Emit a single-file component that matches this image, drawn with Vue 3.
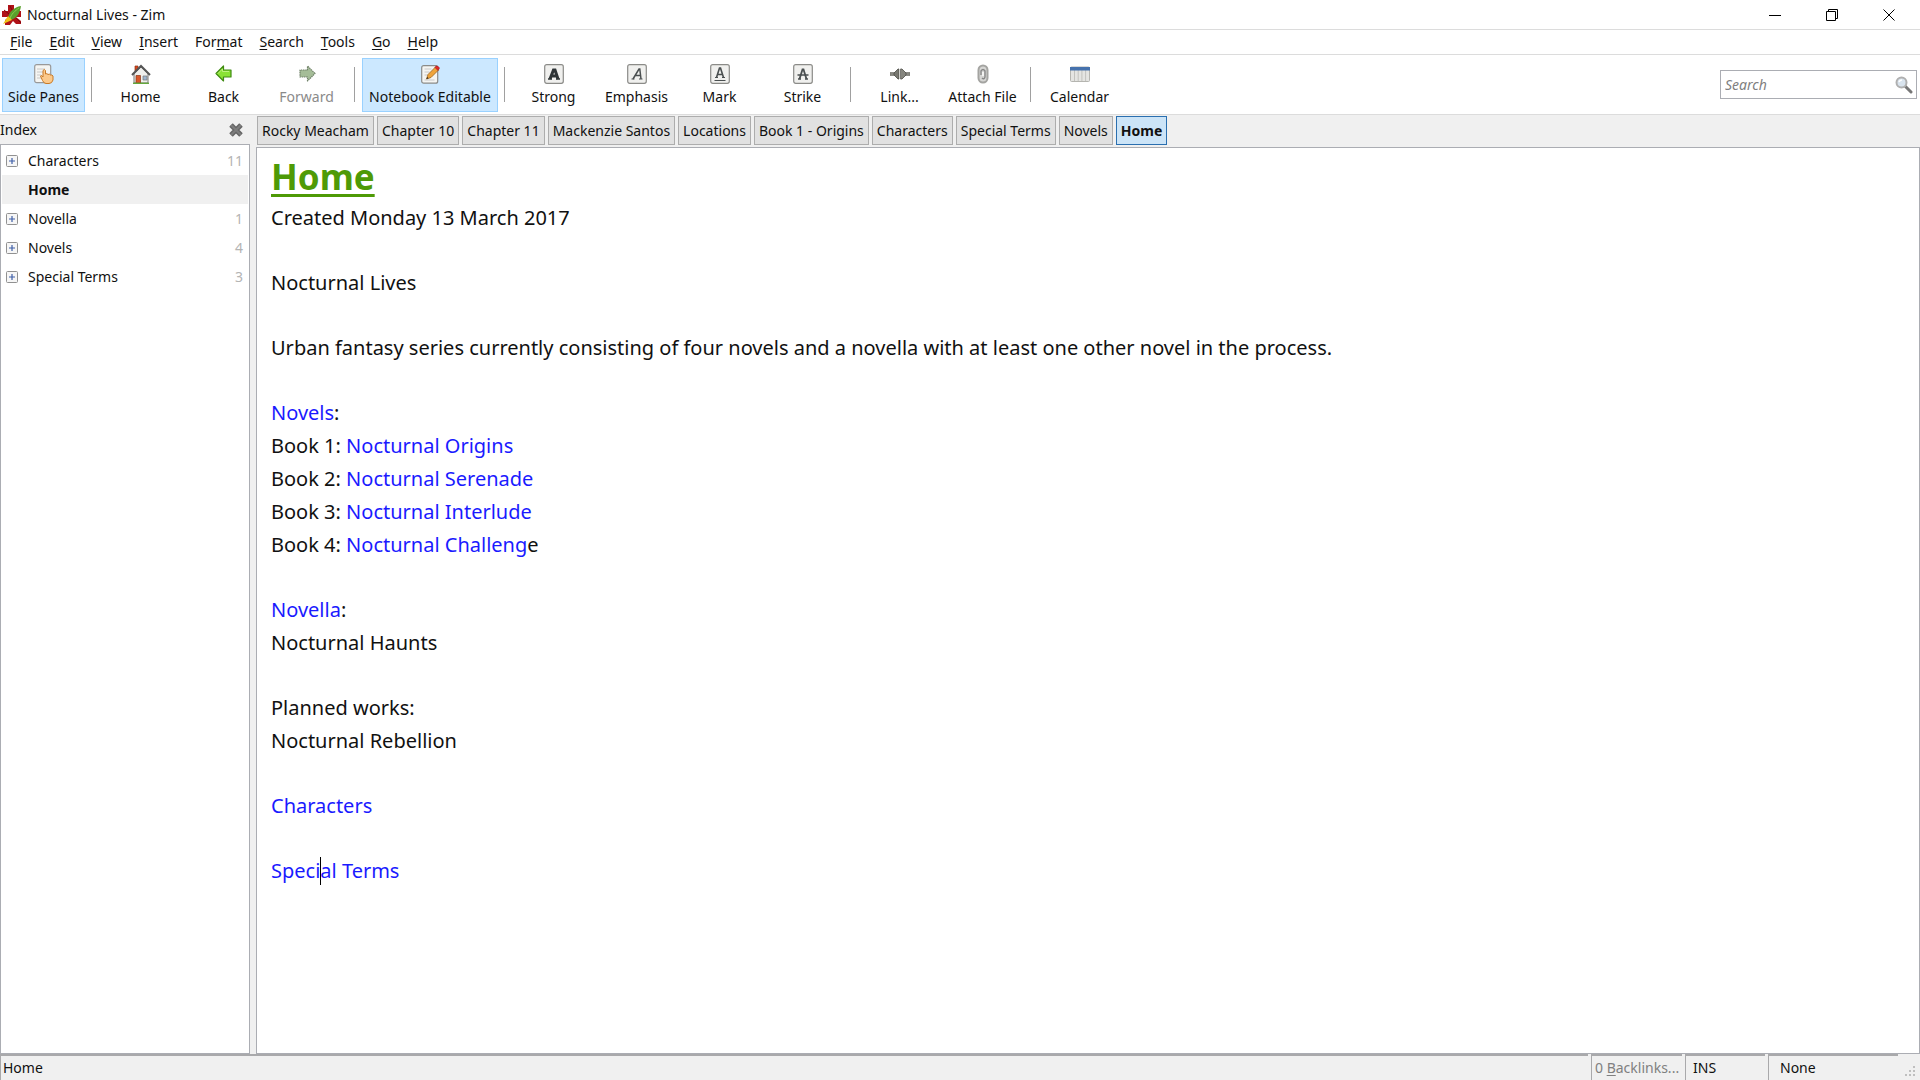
<!-- App.vue -->
<template>
  <div class="window">
    <header class="titlebar">
      <svg class="app-icon" viewBox="0 0 20 20">
        <path d="M6 0h6v6h7v6h-5l5 4v3h-5l-3-3-3 4H3v-5l4-3H0V6h6z" fill="#b01218" />
        <path d="M8 1l3 6M14 13l5 5M2 5l5 4" stroke="#7a0a0e" stroke-width="1" />
        <path d="M19 1C12 2 7 7 6 13l3 2c6-2 9-7 10-14z" fill="#5aa02c" />
        <path d="M17 3C13 6 9 9 8 14" stroke="#8ccf4d" stroke-width="1" fill="none" />
        <path d="M6 11L1 19l9-4z" fill="#f0c419" />
      </svg>
      <span class="title">Nocturnal Lives - Zim</span>
      <div class="window-buttons">
        <button aria-label="Minimize">
          <svg viewBox="0 0 12 12"><path d="M0 6.5h12" /></svg>
        </button>
        <button aria-label="Restore">
          <svg viewBox="0 0 12 12"><path d="M.5 2.500h9v9h-9zM2.500 2.500v-2h9v9h-2" /></svg>
        </button>
        <button aria-label="Close">
          <svg viewBox="0 0 12 12"><path d="M.5.5l11 11M11.500.5l-11 11" /></svg>
        </button>
      </div>
    </header>

    <nav class="menubar">
      <button v-for="item in menus" :key="item.key + item.after">
        {{ item.before }}<u>{{ item.key }}</u>{{ item.after }}
      </button>
    </nav>

    <div class="toolbar">
      <template v-for="(tool, i) in tools" :key="i">
        <span v-if="tool === '|'" class="separator"></span>
        <button
          v-else
          class="tool"
          :class="{ active: tool.active, wide: tool.wide }"
          :disabled="tool.disabled"
        >
          <svg class="tool-icon" viewBox="0 0 20 20" v-html="icons[tool.icon]"></svg>
          <span>{{ tool.label }}</span>
        </button>
      </template>
      <label class="search">
        <input v-model="query" type="text" placeholder="Search" aria-label="Search" />
        <svg viewBox="0 0 18 18">
          <path d="M10 10l6 6" stroke="#777" stroke-width="3" stroke-linecap="round" />
          <circle cx="6.500" cy="6.500" r="5" fill="#d9e4ee" stroke="#b0b0b0" stroke-width="2" />
          <path d="M4 6a3 3 0 0 1 3-2" stroke="#fff" stroke-width="1.500" fill="none" />
        </svg>
      </label>
    </div>

    <div class="workspace">
      <aside class="side-pane">
        <div class="pane-header">
          <span>Index</span>
          <button aria-label="Close pane">
            <svg viewBox="0 0 16 16">
              <path d="M3 3l10 10M13 3L3 13" stroke="#666" stroke-width="5" />
              <path d="M3 3l10 10M13 3L3 13" stroke="#7d7d7d" stroke-width="2" />
            </svg>
          </button>
        </div>
        <ul class="tree">
          <li v-for="page in pages" :key="page.name" :class="{ selected: !page.count }">
            <span class="expander">
              <svg v-if="page.count" viewBox="0 0 12 12">
                <rect x=".5" y=".5" width="11" height="11" rx="1" fill="#f6f6f6" stroke="#919191" />
                <path d="M3 6h6M6 3v6" stroke="#3f5fa8" stroke-width="1.200" />
              </svg>
            </span>
            <span class="page-name">{{ page.name }}</span>
            <span class="count">{{ page.count }}</span>
          </li>
        </ul>
      </aside>

      <main class="main-pane">
        <nav class="pathbar">
          <button v-for="tab in history" :key="tab" :class="{ current: tab === 'Home' }">
            {{ tab }}
          </button>
        </nav>
        <article class="page">
          <h1>Home</h1>
          <p>Created Monday 13 March 2017</p>
          <p>Nocturnal Lives</p>
          <p>
            Urban fantasy series currently consisting of four novels and a novella with at least one
            other novel in the process.
          </p>
          <p>
            <a href="#novels">Novels</a>:<br />
            Book 1: <a href="#origins">Nocturnal Origins</a><br />
            Book 2: <a href="#serenade">Nocturnal Serenade</a><br />
            Book 3: <a href="#interlude">Nocturnal Interlude</a><br />
            Book 4: <a href="#challenge">Nocturnal Challeng</a>e
          </p>
          <p><a href="#novella">Novella</a>:<br />Nocturnal Haunts</p>
          <p>Planned works:<br />Nocturnal Rebellion</p>
          <p><a href="#characters">Characters</a></p>
          <p>
            <a href="#terms">Speci<span class="caret"></span>al Terms</a>
          </p>
        </article>
      </main>
    </div>

    <footer class="statusbar">
      <span class="cell path">Home</span>
      <button class="cell backlinks" disabled>0 <u>B</u>acklinks...</button>
      <span class="cell mode">INS</span>
      <span class="cell style-name">None</span>
      <svg class="grip" viewBox="0 0 12 12">
        <path
          d="M8 0h2v2H8zM4 4h2v2H4zM8 4h2v2H8zM0 8h2v2H0zM4 8h2v2H4zM8 8h2v2H8z"
          fill="#bfbfbf"
        />
      </svg>
    </footer>
  </div>
</template>

<script setup>
import { ref } from "vue";

const query = ref("");

const menus = [
  { before: "", key: "F", after: "ile" },
  { before: "", key: "E", after: "dit" },
  { before: "", key: "V", after: "iew" },
  { before: "", key: "I", after: "nsert" },
  { before: "For", key: "m", after: "at" },
  { before: "", key: "S", after: "earch" },
  { before: "", key: "T", after: "ools" },
  { before: "", key: "G", after: "o" },
  { before: "", key: "H", after: "elp" },
];

// "|" is a separator
const tools = [
  { label: "Side Panes", icon: "panes", active: true },
  "|",
  { label: "Home", icon: "home" },
  { label: "Back", icon: "back" },
  { label: "Forward", icon: "forward", disabled: true },
  "|",
  { label: "Notebook Editable", icon: "edit", active: true, wide: true },
  "|",
  { label: "Strong", icon: "strong" },
  { label: "Emphasis", icon: "emphasis" },
  { label: "Mark", icon: "mark" },
  { label: "Strike", icon: "strike" },
  "|",
  { label: "Link...", icon: "link" },
  { label: "Attach File", icon: "attach" },
  "|",
  { label: "Calendar", icon: "calendar" },
];

const frame =
  '<rect x=".7" y=".7" width="18.600" height="18.600" rx="2" fill="#f0f0ee" stroke="#8b8b88" stroke-width="1.200"/>';

const icons = {
  panes:
    '<rect x=".7" y=".7" width="16" height="18" rx="2" fill="#f5f5f2" stroke="#999" stroke-width="1.200"/>' +
    '<path d="M3 5h8M3 8h6M3 11h4M3 14h4" stroke="#c8c8c8"/>' +
    '<path d="M9 13V6.500q1.500-2 2.500 0V10q1.500-1 2.500.5 1.500-1 2.500.5 1.500-.5 2.500 1v4q-1 3.500-4 3.500h-3q-2 0-3.500-3L6.500 12q1-1.500 2.500 1z" fill="#fbc98b" stroke="#c97b28"/>',
  home:
    '<path d="M4 2h3v5H4z" fill="#d9481f" stroke="#8a3515" stroke-width=".7"/>' +
    '<path d="M3 9.500L10 3l7 6.500V19H3z" fill="#efefed" stroke="#777"/>' +
    '<path d="M1 11L10 2l9 9" fill="none" stroke="#555" stroke-width="2"/>' +
    '<path d="M5 11.500h4.500V19H5z" fill="#d9562b" stroke="#8a3515" stroke-width=".7"/>' +
    '<path d="M12 12h4v4h-4z" fill="#9db5cf" stroke="#777" stroke-width=".7"/>' +
    '<path d="M2 19.300h16" stroke="#65a83c" stroke-width="1.400"/>',
  back: '<path d="M2 9.500L9.500 2v4H17v7H9.500v4z" fill="#8ae234" stroke="#3f8a12" stroke-width="1.200" stroke-linejoin="round"/><path d="M4 9.500L8.500 5v2.500H15" fill="none" stroke="#bdf27d"/>',
  forward:
    '<path d="M18 9.500L10.500 2v4H3v7h7.500v4z" fill="#a5bd98" stroke="#71826a" stroke-width="1.200" stroke-dasharray="1.500 .7" stroke-linejoin="round"/>',
  edit:
    '<rect x="1.700" y="1.700" width="16" height="17.500" rx="2" fill="#f5f5f2" stroke="#8b8b88" stroke-width="1.200"/>' +
    '<path d="M4.500 5h7M4.500 8h5M4.500 11h3M4.500 16h10" stroke="#c8c8c8"/>' +
    '<path d="M6.500 15L8 10.500 15.500 3l3 3L11 13.500z" fill="#efa43b" stroke="#9a6420" stroke-width=".8"/>' +
    '<path d="M15 3.500l1-1.500q2-.5 3.500 2L18 6.500z" fill="#df2929" stroke="#a51818" stroke-width=".6"/>' +
    '<path d="M6.500 15l.7-2 1.300 1.300z" fill="#222"/>',
  strong:
    frame +
    '<path d="M6 15L9.500 6h1.500l3 9M7.500 12h6" fill="none" stroke="#2e3436" stroke-width="3"/><path d="M4 15h4M12 15h4" stroke="#2e3436" stroke-width="1.500"/>',
  emphasis:
    frame +
    '<path d="M6 15l6-10h.8L14 15M8 11.500h5.500" fill="none" stroke="#4a4f50" stroke-width="1.500"/><path d="M4.500 15h3M12 15h3.500" stroke="#4a4f50"/>',
  mark:
    frame +
    '<path d="M6.500 13.500L9.500 4h1l3 9.500M7.500 10.500h5" fill="none" stroke="#4a4f50" stroke-width="1.600"/><path d="M5 13.500h3M12 13.500h3M4.500 16.500h11" stroke="#4a4f50" stroke-width="1.200"/>',
  strike:
    frame +
    '<path d="M6.500 15L9.500 5.500h1l3 9.500" fill="none" stroke="#4a4f50" stroke-width="1.800"/><path d="M5 15h3M12 15h3M4.500 11h11" stroke="#4a4f50" stroke-width="1.500"/>',
  link:
    '<path d="M0 8.500h5v3H0zM15 8.500h5v3h-5z" fill="#888882" stroke="#686862" stroke-width=".6"/>' +
    '<path d="M4 9l4-4h1v10H8l-4-4z" fill="#777770" stroke="#4c4c48" stroke-width=".8"/>' +
    '<path d="M16 9l-4-4h-1.500v10H12l4-4z" fill="#85857e" stroke="#4c4c48" stroke-width=".8"/>' +
    '<path d="M9.700 5v10" stroke="#d6d6d2"/>',
  attach:
    '<rect x="5.500" y="1.500" width="9" height="17" rx="4.500" fill="#d6d6d4" stroke="#a4a4a1" stroke-width="2"/>' +
    '<path d="M8 11V7q2-3 4 0v6q-1 3-3 1" fill="none" stroke="#888" stroke-width="1.400"/><path d="M10 8v4" stroke="#fff" stroke-width="1.400"/>',
  calendar:
    '<rect x=".5" y="3" width="19" height="14.500" rx="1" fill="#e5e5e2" stroke="#b5b5b0"/>' +
    '<path d="M4.500 6v11M8.200 6v11M11.900 6v11M15.600 6v11" stroke="#c2c2be"/>' +
    '<path d="M0 3h20v3.500H0z" fill="#4672ad"/>',
};

const pages = [
  { name: "Characters", count: 11 },
  { name: "Home" },
  { name: "Novella", count: 1 },
  { name: "Novels", count: 4 },
  { name: "Special Terms", count: 3 },
];

const history = [
  "Rocky Meacham",
  "Chapter 10",
  "Chapter 11",
  "Mackenzie Santos",
  "Locations",
  "Book 1 - Origins",
  "Characters",
  "Special Terms",
  "Novels",
  "Home",
];
</script>

<style>
body {
  background: #fff;
}
</style>

<style scoped>
.window {
  display: flex;
  flex-direction: column;
  min-height: 100vh;
  font-family: "Noto Sans", "Open Sans", sans-serif;
  font-size: 14px;
  line-height: 20px;
  color: #111;
  background: #f0f0f0;
}

button {
  margin: 0;
  padding: 0;
  border: 0;
  background: none;
  font: inherit;
  color: inherit;
}

button svg {
  display: block;
}

u {
  text-underline-offset: 2px;
}

/* title bar */
.titlebar {
  display: flex;
  align-items: center;
  height: 29px;
  padding-left: 2px;
  background: #fff;
  border-bottom: 1px solid #dcdcdc;
}

.app-icon {
  width: 20px;
  height: 20px;
  margin-right: 5px;
}

.window-buttons {
  display: flex;
  margin-left: auto;
  padding-right: 3px;
}

.window-buttons button {
  display: flex;
  justify-content: center;
  width: 57px;
}

.window-buttons svg {
  width: 12px;
  height: 12px;
  fill: none;
  stroke: #000;
}

/* menu */
.menubar {
  display: flex;
  gap: 17px;
  height: 24px;
  padding-left: 10px;
  background: #fff;
  border-bottom: 1px solid #dcdcdc;
}

/* toolbar */
.toolbar {
  display: flex;
  align-items: center;
  height: 59px;
  padding: 0 3px 0 2px;
  background: #fff;
  border-bottom: 1px solid #dcdcdc;
}

.tool {
  display: flex;
  flex-direction: column;
  align-items: center;
  gap: 3px;
  box-sizing: border-box;
  width: 83px;
  height: 54px;
  padding-top: 5px;
  border: 1px solid transparent;
  white-space: nowrap;
}

.tool.wide {
  width: 136px;
}

.tool.active {
  background: #cce8ff;
  border-color: #99d1ff;
}

.tool:disabled {
  color: #8a8a8a;
}

.tool-icon {
  width: 20px;
  height: 20px;
}

.separator {
  width: 1px;
  height: 35px;
  margin: 0 7px 0 6px;
  background: #a0a0a0;
}

.search {
  display: flex;
  align-items: center;
  box-sizing: border-box;
  width: 197px;
  height: 29px;
  margin-left: auto;
  padding: 0 3px 0 4px;
  border: 1px solid #abadb3;
}

.search input {
  flex: 1;
  min-width: 0;
  padding: 0;
  border: 0;
  outline: 0;
  font: inherit;
}

.search input::placeholder {
  color: #808080;
  font-style: italic;
}

.search svg {
  width: 18px;
  height: 18px;
}

/* side pane */
.workspace {
  display: flex;
  flex: 1;
  gap: 6px;
}

.side-pane {
  display: flex;
  flex-direction: column;
  width: 250px;
}

.pane-header {
  display: flex;
  align-items: center;
  justify-content: space-between;
  height: 29px;
  padding-right: 6px;
}

.pane-header svg {
  width: 16px;
  height: 16px;
}

.tree {
  flex: 1;
  margin: 0;
  padding: 1px;
  list-style: none;
  background: #fff;
  border: 1px solid #abadb3;
}

.tree li {
  display: flex;
  align-items: center;
  height: 29px;
  padding: 0 5px 0 4px;
}

.tree .selected {
  background: #f0f0f0;
  font-weight: bold;
}

.expander {
  width: 22px;
}

.expander svg {
  display: block;
  width: 12px;
  height: 12px;
}

.page-name {
  flex: 1;
}

.count {
  color: #b4b4b4;
}

/* page */
.main-pane {
  display: flex;
  flex: 1;
  flex-direction: column;
}

.pathbar {
  display: flex;
  gap: 3px;
  padding: 1px 0 2px 1px;
}

.pathbar button {
  height: 29px;
  padding: 0 4px;
  border: 1px solid #adadad;
  background: #e1e1e1;
}

.pathbar .current {
  border-color: #2a6fb0;
  background: #cce4f7;
  font-weight: bold;
}

.page {
  flex: 1;
  padding: 5px 14px;
  background: #fff;
  border: 1px solid #abadb3;
  font-size: 20px;
  line-height: 33px;
}

.page h1 {
  margin: 0;
  font-size: 35px;
  line-height: 48px;
  color: #4e9a06;
  text-decoration: underline;
  text-decoration-thickness: 3px;
  text-underline-offset: 4px;
}

.page p {
  margin: 0 0 32px;
}

.page p:last-child {
  margin: 0;
}

.page a {
  color: #1a1aff;
  text-decoration: none;
}

.caret {
  position: relative;
}

.caret::after {
  content: "";
  position: absolute;
  top: 0;
  left: 0;
  width: 1px;
  height: 28px;
  background: #000;
}

/* status bar */
.statusbar {
  display: flex;
  gap: 3px;
  height: 26px;
}

.cell {
  box-sizing: border-box;
  padding-left: 4px;
  border-top: 2px solid #a9a9ab;
  border-left: 1px solid #a9a9ab;
  text-align: left;
  line-height: 24px;
  white-space: nowrap;
}

.path {
  flex: 1;
  padding-left: 2px;
}

.backlinks {
  width: 91px;
  padding-left: 3px;
  color: #808080;
}

.mode {
  width: 80px;
  padding-left: 7px;
}

.style-name {
  width: 130px;
  padding-left: 11px;
}

.grip {
  align-self: flex-end;
  width: 12px;
  height: 12px;
  margin: 0 3px 2px 4px;
}
</style>
